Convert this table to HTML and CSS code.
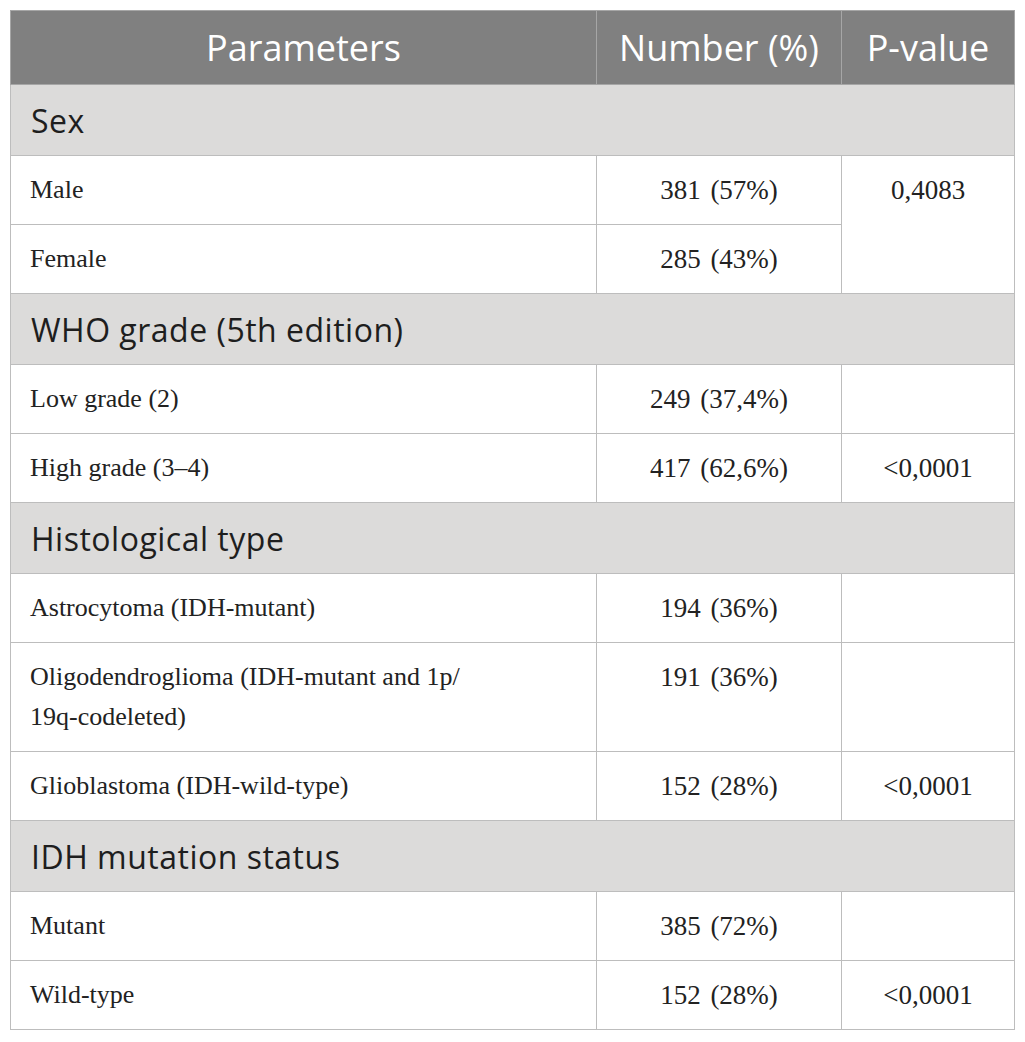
FILE: index.html
```html
<!DOCTYPE html>
<html>
<head>
<meta charset="utf-8">
<link rel="stylesheet" href="styles.css">
</head>
<body>
<table class="tbl">
  <colgroup>
    <col class="c1"><col class="c2"><col class="c3">
  </colgroup>
  <thead>
    <tr class="head"><th>Parameters</th><th>Number (%)</th><th>P-value</th></tr>
  </thead>
  <tbody>
    <tr class="sec"><td colspan="3">Sex</td></tr>
    <tr class="row"><td class="lbl">Male</td><td class="num">381 (57%)</td><td class="pv top" rowspan="2">0,4083</td></tr>
    <tr class="row"><td class="lbl">Female</td><td class="num">285 (43%)</td></tr>
    <tr class="sec"><td colspan="3">WHO grade (5th edition)</td></tr>
    <tr class="row"><td class="lbl">Low grade (2)</td><td class="num">249 (37,4%)</td><td class="pv"></td></tr>
    <tr class="row"><td class="lbl">High grade (3–4)</td><td class="num">417 (62,6%)</td><td class="pv">&lt;0,0001</td></tr>
    <tr class="sec"><td colspan="3">Histological type</td></tr>
    <tr class="row"><td class="lbl">Astrocytoma (IDH-mutant)</td><td class="num">194 (36%)</td><td class="pv"></td></tr>
    <tr class="row"><td class="lbl">Oligodendroglioma (IDH-mutant and 1p/<br>19q-codeleted)</td><td class="num top">191 (36%)</td><td class="pv"></td></tr>
    <tr class="row"><td class="lbl">Glioblastoma (IDH-wild-type)</td><td class="num">152 (28%)</td><td class="pv">&lt;0,0001</td></tr>
    <tr class="sec"><td colspan="3">IDH mutation status</td></tr>
    <tr class="row"><td class="lbl">Mutant</td><td class="num">385 (72%)</td><td class="pv"></td></tr>
    <tr class="row"><td class="lbl">Wild-type</td><td class="num">152 (28%)</td><td class="pv">&lt;0,0001</td></tr>
  </tbody>
</table>
</body>
</html>
```
FILE: styles.css
```css
html, body {
  margin: 0;
  padding: 0;
  background: #ffffff;
}
body {
  padding: 10px;
}
.tbl {
  border-collapse: collapse;
  width: 1004px;
  table-layout: fixed;
}
.c1 { width: 586px; }
.c2 { width: 245px; }
.c3 { width: 173px; }

.tbl td, .tbl th {
  border: 1px solid #bdbdbd;
}
.head th {
  background: #808080;
  color: #ffffff;
  font-family: "Open Sans", Lato, sans-serif;
  font-weight: 400;
  font-size: 36px;
  height: 73px;
  padding: 0;
  text-align: center;
  vertical-align: middle;
  border-color: #a6a6a6;
}
.sec td {
  background: #dcdbda;
  color: #1e1e1e;
  font-family: "Open Sans", Lato, sans-serif;
  font-size: 32px;
  letter-spacing: 0.5px;
  height: 70px;
  padding: 0 0 0 20px;
  vertical-align: middle;
}
.row td {
  font-family: "Liberation Serif", "Times New Roman", serif;
  font-size: 26px;
  color: #222222;
  line-height: 40px;
  padding: 14px 0 14px 19px;
  vertical-align: middle;
}
.row td.num,
.row td.pv {
  font-size: 27px;
  word-spacing: 3px;
  text-align: center;
  padding-left: 0;
}
.row td.top {
  vertical-align: top;
}
```
